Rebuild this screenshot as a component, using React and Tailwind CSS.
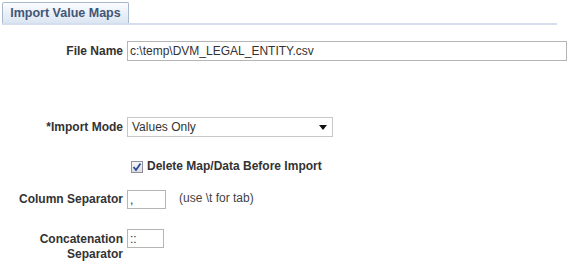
import React from "react";

function Label({ children, className = "" }) {
  return (
    <div
      className={
        "w-[123px] shrink-0 text-right text-[12px] font-bold leading-[15px] text-[#333333] " +
        className
      }
    >
      {children}
    </div>
  );
}

export default function App() {
  return (
    <div
      className="w-[570px] h-[263px] bg-white text-[#333333] overflow-hidden"
      style={{ fontFamily: '"Liberation Sans", Arial, sans-serif' }}
    >
      {/* Tab bar */}
      <div className="pt-[2px] pl-[2px] pr-[13px]">
        <div className="flex items-end border-b-2 border-[#d3dfee]">
          <div className="h-[21px] w-[127px] flex items-center justify-center border border-b-0 border-[#a9b8cc] rounded-t-[2px] bg-gradient-to-b from-[#fbfcfe] to-[#dbe5f2] text-[12.5px] font-bold text-[#415677]">
            Import Value Maps
          </div>
        </div>
      </div>

      {/* File Name */}
      <div className="flex items-center gap-[4px] mt-[16px]">
        <Label>File Name</Label>
        <div className="w-[440px] h-[20px] border border-[#b5b5b5] flex items-center px-[2px] text-[12px] text-[#333333]">
          c:\temp\DVM_LEGAL_ENTITY.csv
        </div>
      </div>

      {/* Import Mode */}
      <div className="flex items-center gap-[4px] mt-[56px]">
        <Label>*Import Mode</Label>
        <div className="w-[206px] h-[20px] border border-[#c8c8c8] flex items-center justify-between pl-[4px] pr-[5px] text-[12px] text-[#333333] bg-white">
          <span>Values Only</span>
          <svg width="8" height="5" viewBox="0 0 8 5">
            <path d="M0 0 L8 0 L4 5 Z" fill="#111" />
          </svg>
        </div>
      </div>

      {/* Checkbox */}
      <div className="flex items-center mt-[23px] pl-[131px] gap-[4px] h-[13px]">
        <div className="w-[12px] h-[12px] border border-[#8f8f9d] bg-gradient-to-b from-[#f6f6f6] to-[#dedede] flex items-center justify-center">
          <svg width="10" height="10" viewBox="0 0 10 10">
            <path d="M1.5 5 L4 8 L8.5 1.5" stroke="#2b4a9a" strokeWidth="1.8" fill="none" />
          </svg>
        </div>
        <span className="text-[12px] font-bold text-[#333333] leading-[15px]">
          Delete Map/Data Before Import
        </span>
      </div>

      {/* Column Separator */}
      <div className="flex items-center gap-[4px] mt-[17px]">
        <Label>Column Separator</Label>
        <div className="w-[39px] h-[19px] border border-[#b5b5b5] flex items-center px-[2px] text-[12px] text-[#333333]">
          ,
        </div>
        <span className="ml-[9px] -mt-[4px] text-[12px] text-[#444444]">(use \t for tab)</span>
      </div>

      {/* Concatenation Separator */}
      <div className="flex items-start gap-[4px] mt-[20px]">
        <Label className="pt-[3px]">
          Concatenation
          <br />
          Separator
        </Label>
        <div className="w-[37px] h-[19px] border border-[#b5b5b5] flex items-center px-[2px] text-[12px] text-[#333333]">
          ::
        </div>
      </div>
    </div>
  );
}
